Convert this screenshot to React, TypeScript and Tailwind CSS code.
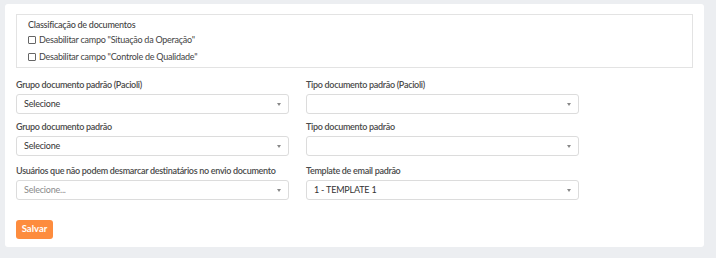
import React from 'react';

const font = { fontFamily: 'Lato, "Open Sans", sans-serif' };

function Caret() {
  return <span className="w-0 h-0 border-l-[2.5px] border-r-[2.5px] border-t-[3px] border-l-transparent border-r-transparent border-t-[#888]" />;
}

function Select({ value, muted = false }: { value?: string; muted?: boolean }) {
  return (
    <div className="h-[20px] border border-[#dcdcdc] rounded-[3px] bg-white flex items-center justify-between pl-[7px] pr-[7px]">
      <span className={`text-[9px] tracking-[-0.2px] ${muted ? 'text-[#8a8a8a]' : 'text-[#333]'}`}>{value}</span>
      <Caret />
    </div>
  );
}

function Field({ label, value, muted, className = '' }: { label: string; value?: string; muted?: boolean; className?: string }) {
  return (
    <div className={className}>
      <div className="text-[9px] tracking-[-0.3px] font-semibold text-[#4a4a4a] leading-[14px] mb-[2px] whitespace-nowrap">{label}</div>
      <Select value={value} muted={muted} />
    </div>
  );
}

function Check({ label, className = '' }: { label: string; className?: string }) {
  return (
    <div className={`flex items-center gap-[3px] text-[9px] tracking-[-0.25px] text-[#444] leading-[14px] ${className}`}>
      <span className="w-[8px] h-[8px] border border-[#666] rounded-[1px] bg-white" />
      {label}
    </div>
  );
}

export default function App() {
  return (
    <div style={font} className="w-[716px] h-[258px] bg-[#eceef1] pt-[4px] pl-[5px] pr-[12px] pb-[11px]">
      <div className="bg-white rounded-[3px] h-full pt-[10px] px-[11px]">
        {/* Classificação */}
        <div className="border border-[#e3e3e3] h-[54px] pl-[11px] pt-[3px] flex flex-col">
          <div className="text-[9px] tracking-[-0.25px] font-medium text-[#444] leading-[14px] mb-[1px]">Classificação de documentos</div>
          <Check label={'Desabilitar campo "Situação da Operação"'} />
          <Check className="mt-[3px]" label={'Desabilitar campo "Controle de Qualidade"'} />
        </div>

        <div className="grid grid-cols-[273px_273px] gap-x-[17px] mt-[10px]">
          <Field label="Grupo documento padrão (Pacioli)" value="Selecione" />
          <Field label="Tipo documento padrão (Pacioli)" />
          <Field className="mt-[6px]" label="Grupo documento padrão" value="Selecione" />
          <Field className="mt-[6px]" label="Tipo documento padrão" />
          <Field className="mt-[8px]" label="Usuários que não podem desmarcar destinatários no envio documento" value="Selecione..." muted />
          <Field className="mt-[8px]" label="Template de email padrão" value="1 - TEMPLATE 1" />
        </div>

        <button className="mt-[20px] h-[19px] w-[37px] rounded-[3px] bg-[#fd8c3e] text-white text-[9.5px] font-bold flex items-center justify-center">
          Salvar
        </button>
      </div>
    </div>
  );
}
